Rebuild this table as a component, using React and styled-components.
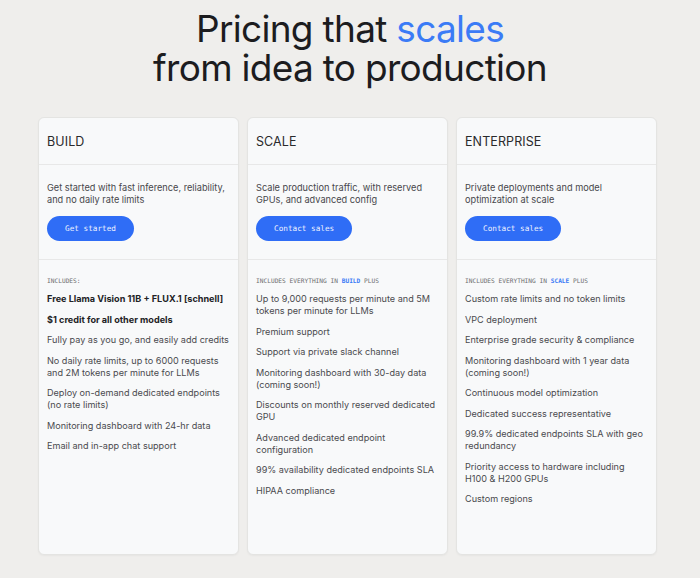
import React from 'react';
import styled, { createGlobalStyle } from 'styled-components';

const GlobalStyle = createGlobalStyle`
  html, body {
    margin: 0;
    padding: 0;
    background: #efeeec;
  }
  body {
    font-family: Inter, "Liberation Sans", sans-serif;
    -webkit-font-smoothing: antialiased;
  }
`;

const plans = [
  {
    name: 'BUILD',
    desc: 'Get started with fast inference, reliability, and no daily rate limits',
    cta: 'Get started',
    includes: null,
    features: [
      { text: 'Free Llama Vision 11B + FLUX.1 [schnell]', bold: true },
      { text: '$1 credit for all other models', bold: true },
      { text: 'Fully pay as you go, and easily add credits' },
      { text: 'No daily rate limits, up to 6000 requests and 2M tokens per minute for LLMs' },
      { text: 'Deploy on-demand dedicated endpoints (no rate limits)' },
      { text: 'Monitoring dashboard with 24-hr data' },
      { text: 'Email and in-app chat support' },
    ],
  },
  {
    name: 'SCALE',
    desc: 'Scale production traffic, with reserved GPUs, and advanced config',
    cta: 'Contact sales',
    includes: 'BUILD',
    features: [
      { text: 'Up to 9,000 requests per minute and 5M tokens per minute for LLMs' },
      { text: 'Premium support' },
      { text: 'Support via private slack channel' },
      { text: 'Monitoring dashboard with 30-day data (coming soon!)' },
      { text: 'Discounts on monthly reserved dedicated GPU' },
      { text: 'Advanced dedicated endpoint configuration' },
      { text: '99% availability dedicated endpoints SLA' },
      { text: 'HIPAA compliance' },
    ],
  },
  {
    name: 'ENTERPRISE',
    desc: 'Private deployments and model optimization at scale',
    cta: 'Contact sales',
    includes: 'SCALE',
    features: [
      { text: 'Custom rate limits and no token limits' },
      { text: 'VPC deployment' },
      { text: 'Enterprise grade security & compliance' },
      { text: 'Monitoring dashboard with 1 year data (coming soon!)' },
      { text: 'Continuous model optimization' },
      { text: 'Dedicated success representative' },
      { text: '99.9% dedicated endpoints SLA with geo redundancy' },
      { text: 'Priority access to hardware including H100 & H200 GPUs' },
      { text: 'Custom regions' },
    ],
  },
];

export default function App() {
  return (
    <Page>
      <GlobalStyle />
      <Title>
        <TitleLine>
          Pricing that <Accent>scales</Accent>
        </TitleLine>
        <TitleLine>from idea to production</TitleLine>
      </Title>
      <Grid>
        {plans.map((plan) => (
          <Card key={plan.name}>
            <CardHeader>{plan.name}</CardHeader>
            <Intro>
              <Desc>{plan.desc}</Desc>
              <Button>{plan.cta}</Button>
            </Intro>
            <Features>
              <Label>
                {plan.includes ? (
                  <>
                    Includes everything in <LabelAccent>{plan.includes}</LabelAccent> plus
                  </>
                ) : (
                  'Includes:'
                )}
              </Label>
              <List>
                {plan.features.map((f) => (
                  <Item key={f.text} $bold={f.bold}>
                    {f.text}
                  </Item>
                ))}
              </List>
            </Features>
          </Card>
        ))}
      </Grid>
    </Page>
  );
}

const Page = styled.div`
  width: 700px;
  min-height: 578px;
  padding-top: 9px;
  box-sizing: border-box;
`;

const Title = styled.h1`
  margin: 0;
  text-align: center;
  font-size: 37px;
  font-weight: 400;
  letter-spacing: -0.7px;
  color: #1c1c1f;
`;

const TitleLine = styled.span`
  display: block;
  line-height: 39px;
`;

const Accent = styled.span`
  color: #3b7bf6;
`;

const Grid = styled.div`
  display: grid;
  grid-template-columns: repeat(3, 201px);
  gap: 8px;
  margin: 30px 0 0 38px;
`;

const Card = styled.div`
  display: flex;
  flex-direction: column;
  height: 438px;
  box-sizing: border-box;
  background: #f8f9fa;
  border: 1px solid #e4e4e2;
  border-radius: 6px;
  box-shadow: 0 1px 2px rgba(0, 0, 0, 0.04);
`;

const CardHeader = styled.div`
  height: 47px;
  padding: 1px 8px 0;
  box-sizing: border-box;
  display: flex;
  align-items: center;
  font-size: 12.5px;
  letter-spacing: 0.1px;
  color: #2a2a2c;
  border-bottom: 1px solid #e8e8e8;
`;

const Intro = styled.div`
  padding: 17px 8px 18px;
  border-bottom: 1px solid #e8e8e8;
`;

const Desc = styled.p`
  margin: 0 0 9px;
  font-size: 9.2px;
  line-height: 12px;
  color: #47474b;
`;

const Button = styled.button`
  height: 25px;
  padding: 0 18px;
  border: none;
  border-radius: 13px;
  background: #2f6df6;
  color: #eef2ff;
  font-family: "DejaVu Sans Mono", "Liberation Mono", monospace;
  font-size: 7.7px;
  cursor: pointer;
`;

const Features = styled.div`
  padding: 17px 7.5px 0 8px;
`;

const Label = styled.div`
  font-family: "DejaVu Sans Mono", "Liberation Mono", monospace;
  font-size: 6.2px;
  line-height: 8px;
  text-transform: uppercase;
  color: #6d6d70;
  margin-bottom: 8px;
`;

const LabelAccent = styled.span`
  color: #3b7bf6;
  font-weight: 700;
`;

const List = styled.ul`
  list-style: none;
  margin: 0;
  padding: 0;
  display: flex;
  flex-direction: column;
  gap: 8.5px;
`;

const Item = styled.li`
  font-size: 9.1px;
  line-height: 12px;
  font-weight: ${(p) => (p.$bold ? 700 : 400)};
  color: ${(p) => (p.$bold ? '#222225' : '#4a4a4e')};
`;
